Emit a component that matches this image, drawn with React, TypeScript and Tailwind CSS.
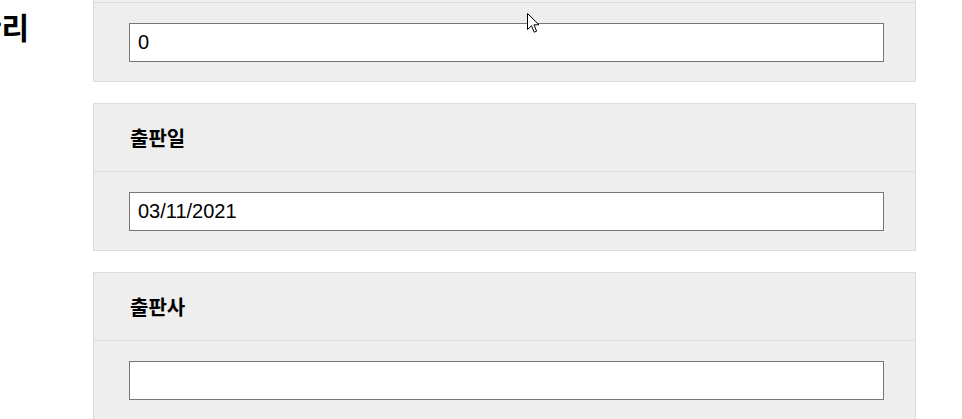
import React from "react";

const fields = [
  { label: "", value: "0", hideHeader: true },
  { label: "출판일", value: "03/11/2021" },
  { label: "출판사", value: "" },
];

function Card({ label, value, hideHeader }: { label: string; value: string; hideHeader?: boolean }) {
  return (
    <div className="border border-[#dcdcdc] bg-[#eeeeee]">
      <div className="h-[68px] flex items-center pl-[36px] border-b border-[#dcdcdc]">
        {!hideHeader && (
          <span className="text-[20px] font-bold text-black leading-none" style={{ fontFamily: '"Noto Sans CJK KR", "Noto Sans", sans-serif' }}>
            {label}
          </span>
        )}
      </div>
      <div className="pl-[35px] pr-[31px] pt-[20px] pb-[19px]">
        <input
          readOnly
          value={value}
          className="block w-full h-[39px] bg-white border border-[#767676] px-[8px] text-[20px] text-black outline-none"
          style={{ fontFamily: '"Liberation Sans", Arial, sans-serif' }}
        />
      </div>
    </div>
  );
}

export default function App() {
  return (
    <div className="relative w-[962px] h-[419px] overflow-hidden bg-white">
      <div className="flex">
        <div className="w-[93px] shrink-0 pt-[10px]">
          <h1
            className="ml-[-26px] text-[30px] font-bold leading-[32px] text-black whitespace-nowrap"
            style={{ fontFamily: '"Noto Sans CJK KR", "Noto Sans", sans-serif' }}
          >
            관리
          </h1>
        </div>
        <div className="w-[823px] shrink-0 mt-[-66px] flex flex-col gap-[21px]">
          {fields.map((f, i) => (
            <Card key={i} label={f.label} value={f.value} hideHeader={f.hideHeader} />
          ))}
        </div>
      </div>
      <svg className="absolute left-[527px] top-[13px]" width="13" height="20" viewBox="0 0 13 20">
        <path d="M0.5 0.5 L0.5 16.5 L4.5 12.8 L7.2 19.2 L9.6 18.2 L7 11.8 L12 11.8 Z" fill="white" stroke="black" strokeWidth="1" strokeLinejoin="miter" />
      </svg>
    </div>
  );
}
